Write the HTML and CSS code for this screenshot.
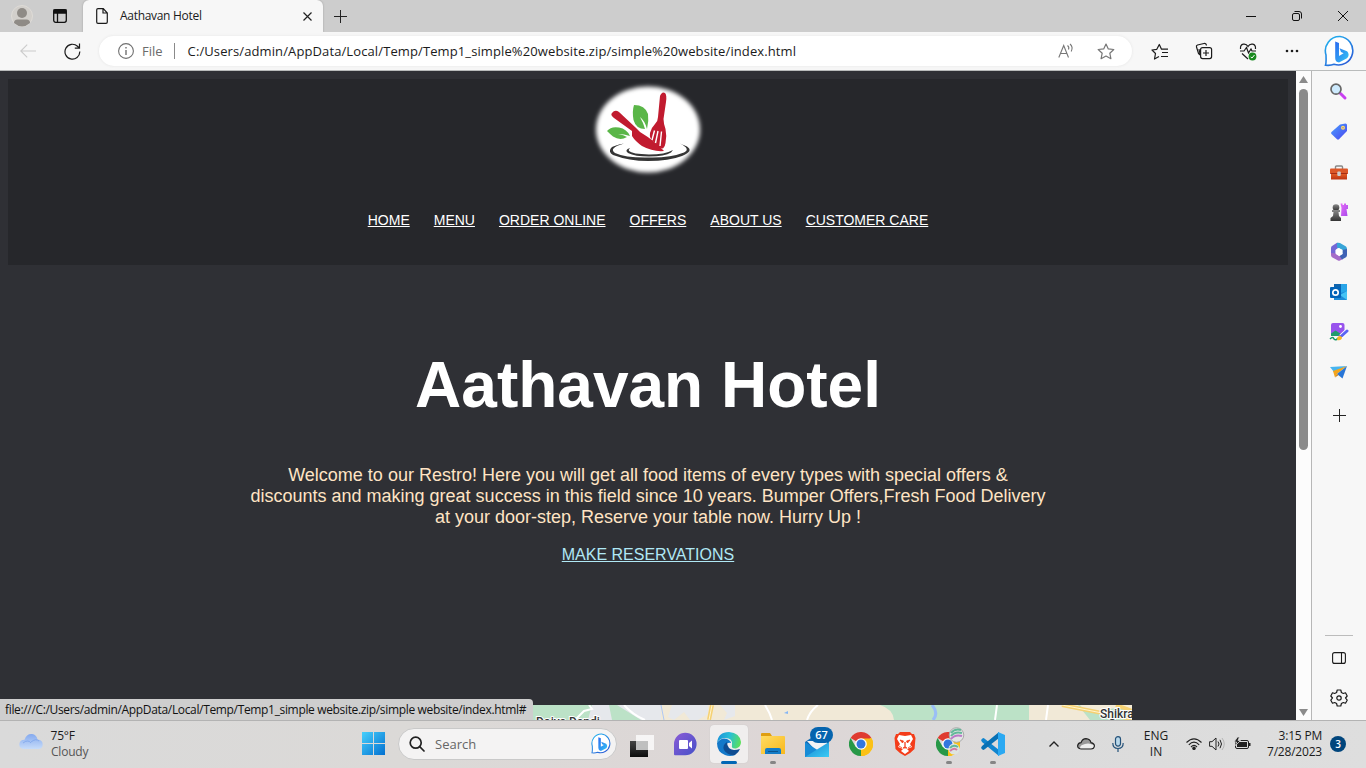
FILE: index.html
```html
<!DOCTYPE html>
<html lang="en">
<head>
<meta charset="utf-8">
<title>Aathavan Hotel</title>
<link rel="stylesheet" href="styles.css">
</head>
<body>
<svg class="defs" width="0" height="0" aria-hidden="true">
  <defs>
    <linearGradient id="bing" x1="0" y1="0" x2="0.7" y2="1"><stop offset="0" stop-color="#20b8f0"/><stop offset="1" stop-color="#2a5fd8"/></linearGradient>
    <linearGradient id="bingb" x1="0" y1="0" x2="1" y2="1"><stop offset="0" stop-color="#2a6af0"/><stop offset="1" stop-color="#35c4f5"/></linearGradient>
    <linearGradient id="win" x1="0" y1="0" x2="1" y2="1"><stop offset="0" stop-color="#46d0fc"/><stop offset="1" stop-color="#0370d0"/></linearGradient>
    <linearGradient id="purple" x1="0" y1="0" x2="1" y2="1"><stop offset="0" stop-color="#8b5cd6"/><stop offset="1" stop-color="#4550c8"/></linearGradient>
    <linearGradient id="edgeTop" x1="0" y1="0.3" x2="1" y2="0.5"><stop offset="0" stop-color="#1a93da"/><stop offset="0.5" stop-color="#28bfd6"/><stop offset="1" stop-color="#5be05c"/></linearGradient>
    <linearGradient id="folder" x1="0" y1="0" x2="1" y2="1"><stop offset="0" stop-color="#ffdb62"/><stop offset="1" stop-color="#f8b81c"/></linearGradient>
    <linearGradient id="cloud" x1="0" y1="0" x2="0" y2="1"><stop offset="0" stop-color="#84a9ee"/><stop offset="1" stop-color="#c7dcfa"/></linearGradient>
    <linearGradient id="tag" x1="0" y1="0" x2="1" y2="1"><stop offset="0" stop-color="#4aa0ff"/><stop offset="1" stop-color="#4b45ef"/></linearGradient>
    <linearGradient id="orange" x1="0" y1="0" x2="0" y2="1"><stop offset="0" stop-color="#e8632a"/><stop offset="1" stop-color="#bd3310"/></linearGradient>
    <linearGradient id="pawn" x1="0" y1="0" x2="0" y2="1"><stop offset="0" stop-color="#8a8a8a"/><stop offset="1" stop-color="#333"/></linearGradient>
    <linearGradient id="rook" x1="0" y1="0" x2="1" y2="1"><stop offset="0" stop-color="#e56cf8"/><stop offset="1" stop-color="#a94bea"/></linearGradient>
    <linearGradient id="mail" x1="0" y1="0" x2="1" y2="1"><stop offset="0" stop-color="#1482d0"/><stop offset="1" stop-color="#3ccbf4"/></linearGradient>
    <linearGradient id="dark" x1="0" y1="0" x2="0" y2="1"><stop offset="0" stop-color="#444"/><stop offset="1" stop-color="#0d0d0d"/></linearGradient>
    <filter id="soft" x="-10%" y="-10%" width="120%" height="120%"><feGaussianBlur stdDeviation="2.2"/></filter>
    <symbol id="bingmark" viewBox="0 0 32 32">
      <path d="M16 1.500A14.300 14.300 0 1 1 10 29.300C7.600 30.300 4.500 30.500 1.500 30.200C2.500 27 2 24 2 20A14.300 14.300 0 0 1 16 1.500Z" fill="#fff" stroke="url(#bing)" stroke-width="1.600"/>
      <path d="M11.200 6.500L15 8V21L19.600 18.300L17 17L15.500 13.200L23 16.300C25.800 19 24.500 22.500 22.500 23.600L15 27.500Q11.200 27 11.200 23Z" fill="url(#bingb)"/>
    </symbol>
    <symbol id="chrome" viewBox="0 0 24 24">
      <path d="M12 12L1.600 6A12 12 0 0 1 22.400 6Z" fill="#df3b30"/>
      <path d="M12 12L22.400 6A12 12 0 0 1 12 24Z" fill="#fbc116"/>
      <path d="M12 12V24A12 12 0 0 1 1.600 6L6.800 15Z" fill="#279847"/>
      <path d="M12 6.500H22.700A12 12 0 0 1 12 24L16.800 15Z" fill="#fbc116"/>
      <circle cx="12" cy="12" r="5.800" fill="#fff"/><circle cx="12" cy="12" r="4.500" fill="#3377df"/>
    </symbol>
  </defs>
</svg>
<div class="screen">
  <header class="tabs">
    <div class="profile"><svg width="22" height="22" viewBox="0 0 22 22"><circle cx="11" cy="11" r="10.500" fill="#d2cfcb" stroke="#dedbd7"/><circle cx="11" cy="8" r="5" fill="#8f8b86"/><path d="M3 18Q3 14.500 6.500 14.500H15.500Q19 14.500 19 18Q11 25 3 18Z" fill="#8f8b86"/></svg></div>
    <div class="workspaces"><svg width="14" height="14" viewBox="0 0 14 14" fill="none" stroke="#111" stroke-width="1.300"><rect x=".7" y=".7" width="12.600" height="12.600" rx="2"/><path d="M1 1H13V4H1Z" fill="#111"/><path d="M4.500 4V13"/></svg></div>
    <div class="tab">
      <svg width="12" height="16" viewBox="0 0 12 16" fill="none" stroke="#1b1b1b" stroke-width="1.200"><path d="M2 .7H7.300L11.300 5V14Q11.300 15.300 10 15.300H2Q.7 15.300 .7 14V2Q.7 .7 2 .7ZM7 .7V5H11.300"/></svg>
      <span class="tab-title">Aathavan Hotel</span>
      <svg width="9" height="9" viewBox="0 0 9 9" stroke="#222" stroke-width="1.200"><path d="M.5 .5L8.500 8.500M8.500 .5L.5 8.500"/></svg>
    </div>
    <svg class="newtab" width="13" height="13" viewBox="0 0 13 13" stroke="#222"><path d="M6.500 0V13M0 6.500H13"/></svg>
    <div class="winbtns">
      <svg width="46" height="32" viewBox="0 0 46 32" stroke="#111"><path d="M18 16.500H28"/></svg>
      <svg width="46" height="32" viewBox="0 0 46 32" stroke="#111" fill="none"><rect x="18.500" y="13.500" width="7" height="7" rx="1.500"/><path d="M20.500 11.500H25Q27.500 11.500 27.500 14V18.500"/></svg>
      <svg width="46" height="32" viewBox="0 0 46 32" stroke="#111"><path d="M18 11L28 21M28 11L18 21"/></svg>
    </div>
  </header>

  <div class="toolbar">
    <svg class="back" width="16" height="14" viewBox="0 0 16 14" fill="none" stroke="#cbcbcb" stroke-width="1.100"><path d="M16 7H.8M7.200 .6L.8 7L7.200 13.400"/></svg>
    <svg class="reload" width="17" height="17" viewBox="0 0 17 17" fill="none" stroke="#1c1c1c" stroke-width="1.200"><path d="M15.800 8.500A7.400 7.400 0 1 1 13.500 3.300L15.300 5M15.500 .5V5.200H10.800"/></svg>
    <div class="address">
      <svg width="16" height="16" viewBox="0 0 16 16" fill="none" stroke="#707070" stroke-width="1.100"><circle cx="8" cy="8" r="7.400"/><path d="M8 7V12M8 4V5.500" stroke-width="1.400"/></svg>
      <span class="scheme">File</span><span class="divider"></span>
      <span class="url">C:/Users/admin/AppData/Local/Temp/Temp1_simple%20website.zip/simple%20website/index.html</span>
      <svg class="read" width="17" height="16" viewBox="0 0 17 16" fill="none" stroke="#777" stroke-width="1.100"><path d="M.8 14.500L5.700 2.500L10.500 14.500M2.500 10.500H9M9.500 2.500Q11.500 4 10.500 6.500M12 1Q15.500 4 13.200 8.500"/></svg>
      <svg width="18" height="17" viewBox="0 0 18 17" fill="none" stroke="#777" stroke-width="1.200" stroke-linejoin="round"><path d="M9 1L11.300 5.900L16.800 6.500L12.800 10.200L13.900 15.700L9 13L4.100 15.700L5.200 10.200L1.200 6.500L6.700 5.900Z"/></svg>
    </div>
    <div class="tools">
      <svg width="44" height="38" viewBox="0 0 44 38" fill="none" stroke="#1c1c1c" stroke-width="1.200" stroke-linejoin="round"><path d="M21 24.500L16.500 27L17.500 21.500L14 18L18.800 17.300L21.300 12.500L23.500 17.200H30M24 20.500H30M23 24.500H30"/></svg>
      <svg width="44" height="38" viewBox="0 0 44 38" fill="none" stroke="#1c1c1c" stroke-width="1.200"><path d="M18 23L16.500 21.500L14.500 15Q14 13.500 15.500 13L22 11.500Q24 11 24.500 13.500M18 22L17 17"/><rect x="18.600" y="15.600" width="11" height="11" rx="2"/><path d="M24 18V24M21 21H27"/></svg>
      <svg width="44" height="38" viewBox="0 0 44 38" fill="none" stroke="#1c1c1c" stroke-width="1.200"><path d="M14.500 17C14 11 20 11 22 14.500C24 11 30 11 29.500 17M14 19H18L20.500 15.500L22.500 21L25 17L26 19H30M16 21.500L22 27"/><circle cx="26.500" cy="24.500" r="3.900" fill="#198a1f" stroke="none"/><path d="M24.700 25L26 26L28.500 23" stroke="#fff" stroke-width="1"/></svg>
      <svg width="44" height="38" viewBox="0 0 44 38" fill="#1c1c1c"><circle cx="17" cy="19" r="1.300"/><circle cx="22" cy="19" r="1.300"/><circle cx="27" cy="19" r="1.300"/></svg>
    </div>
    <svg class="bing" width="32" height="32"><use href="#bingmark"/></svg>
  </div>

  <main class="middle">
    <section class="page">
      <div class="banner">
        <svg class="logo" width="120" height="104" viewBox="588 77 120 104">
          <ellipse cx="648" cy="129.500" rx="52" ry="43" fill="#fff" filter="url(#soft)"/>
          <path d="M611 148Q608 152 613 155Q629 161 648 161Q669 161 682 156Q694 151 687 146.500L680 143.500Q691 149 684 152.500Q670 158 649 157.500Q626 158 615 153Q608 148 624 143.500Q613 145.500 611 148Z" fill="#353535"/>
          <path d="M630 148Q624 150 628 153Q635 156.500 649 156.500Q665 156.500 671 152.500L673 150Q665 154.500 649 154.500Q632 154 629 151Q628 150 630 148Z" fill="#353535"/>
          <path d="M634 105Q645 105 648 114Q649 121 647 129Q645 121 640 117Q643 122 645 129Q636 129 633.500 120Q632 111 634 105Z" fill="#5ab648"/>
          <path d="M607 131Q611 126 619 127.500Q627 129 630 136Q624 134 618 134Q624 135 627 137Q620 141 613 136.500Q610 134 607 131Z" fill="#5ab648"/>
          <path d="M612 113Q615 109 619 112L635 127Q639 131 640 132Q655 141 664 151Q653 152 642 146Q635 141 632 136V131L614 118Q610 115 612 113Z" fill="#c11b2f"/>
          <path d="M660 96Q662 91 665 93Q667 95 666 102L663.500 119Q663.500 123 665.500 129Q667 136 665.500 143Q665 147 663 148.500Q658 148 654 142Q649 139 650 133Q651 128 655 124Q658 121 658 117Z" fill="#c11b2f"/>
          <path d="M654.500 130.500L652 140M658 131L655.500 143M661.500 131.500L660 146" fill="none" stroke="#fff" stroke-width="1.400"/>
        </svg>
        <nav class="menu"><a>HOME</a><a>MENU</a><a>ORDER ONLINE</a><a>OFFERS</a><a>ABOUT US</a><a>CUSTOMER CARE</a></nav>
      </div>
      <div class="hero">
        <h1>Aathavan Hotel</h1>
        <p>Welcome to our Restro! Here you will get all food items of every types with special offers &amp;<br>discounts and making great success in this field since 10 years. Bumper Offers,Fresh Food Delivery<br>at your door-step, Reserve your table now. Hurry Up !</p>
        <a class="reserve">MAKE RESERVATIONS</a>
      </div>
      <svg class="map" width="968" height="15" viewBox="164 705 968 15">
        <path fill="#bce2c7" d="M164 705H1132V720H164Z"/>
        <path fill="#e6e8ec" d="M592 705H609L612 720H588ZM617 705H661V720H641Z"/>
        <path fill="#f1e9d7" d="M661 705H880Q893 709 894 720H661ZM1029 705H1078L1090 720H1029Z"/>
        <path fill="#e6e8ec" d="M672 705H708V714L698 720H690L684 712L674 720L668 717ZM720 705H735V716L724 720L727 713Z"/>
        <path fill="#f4ecd8" d="M1080 705H1132V712Q1114 704 1102 713L1084 710Z"/>
        <path fill="none" stroke="#fff" stroke-width="2" d="M575 720L584 711L592 709L589 705M624 705Q633 715 645 720M765 705Q770 713 772 720M818 705Q810 711 807 720M997 705L995 720M1048 705L1046 720"/>
        <path fill="none" stroke="#aec7f4" d="M661 705L664 720"/><path fill="none" stroke="#9abef6" stroke-width="3" d="M932 705Q939 713 933 720"/>
        <path fill="#86b6f5" d="M784 713L788 711V714Z"/>
        <path fill="none" stroke="#f5d173" stroke-width="4" d="M712 705L709 720M1062 705L1132 719M1116 705L1132 711"/>
        <path fill="none" stroke="#fff4ce" d="M712 705L709 720M1062 705L1132 719"/>
        <text x="536" y="726" class="place">Doiya Dandi</text>
        <text x="1100" y="717.500" class="place">Shikrapur</text>
        <text x="1108" y="728" class="place">Gaon</text>
      </svg>
      <div class="status">file:///C:/Users/admin/AppData/Local/Temp/Temp1_simple website.zip/simple website/index.html#</div>
    </section>
    <div class="scroll">
      <svg width="9" height="7" viewBox="0 0 9 7"><path d="M4.500 0L9 7H0Z" fill="#8b8b8b"/></svg>
      <div class="thumb"></div>
      <svg class="down" width="9" height="7" viewBox="0 0 9 7"><path d="M4.500 7L9 0H0Z" fill="#8b8b8b"/></svg>
    </div>
    <aside class="side">
      <svg width="20" height="20" viewBox="0 0 20 20"><path d="M11.500 11.500L16 16" stroke="#c83ff0" stroke-width="3" stroke-linecap="round"/><circle cx="7" cy="7.200" r="5" fill="#cdeafd" stroke="#666" stroke-width="1.700"/></svg>
      <svg width="20" height="20" viewBox="0 0 20 20"><path d="M11 2.500L16.500 1.500Q18 1.500 18 3V9L10 17.300Q9 18 8 17.300L2.500 12Q1.500 11 2.500 10Z" fill="url(#tag)"/><circle cx="14" cy="5.800" r="2" fill="#ffdf63"/><circle cx="14" cy="5.800" r=".8" fill="#9a79ba"/></svg>
      <svg width="20" height="20" viewBox="0 0 20 20"><path d="M6.500 7V5Q6.500 4 7.500 4H12.500Q13.500 4 13.500 5V7" fill="none" stroke="#888" stroke-width="1.400"/><rect x="1" y="6.500" width="18" height="5.500" rx="1" fill="#dc5728"/><path d="M2 11H18V17.500H2Z" fill="url(#orange)"/><path d="M1.500 11.500H18.500" stroke="#a52d13"/><rect x="8.300" y="9.500" width="3.500" height="4.500" rx="1" fill="#ccc"/></svg>
      <svg width="20" height="20" viewBox="0 0 20 20"><path d="M11.500 1.500H13.500V3H15V1.500H17V3H19V7H17.500L18.500 14H12L12.500 6Z" fill="url(#rook)"/><circle cx="7" cy="5.500" r="3.300" fill="url(#pawn)"/><path d="M3 8H11V10H9.500L10 14L12 16V19H1.500V16L4 14L4.500 10H3Z" fill="url(#pawn)"/></svg>
      <svg width="20" height="20" viewBox="0 0 20 20"><path d="M8 .8L12 2.500L9 6L6.500 8V12L2 13V6Q2 4.500 3 4Z" fill="#7468d6"/><path d="M8 .8Q9.500 .5 11 1L17 4.500Q18 5.500 18 7V10L13.500 11V8L8 5.500Z" fill="#38a5d8"/><path d="M2 11L7 11.500L11 14.500L14 17L11 18.500Q10 19 9 18.500L3 15.200Q2 14.500 2 13Z" fill="#a56cc8"/><path d="M18 7V13Q18 14.500 17 15.200L13 17.500L10.500 14L13.500 12V8Z" fill="#3f62b5"/><path d="M10 6L13.500 8V12L10 14L6.800 12V8Z" fill="#fff"/></svg>
      <svg width="20" height="20" viewBox="0 0 20 20"><path d="M5 2H18V18H5Z" fill="#28a8ea"/><path d="M5 2H12V8H5Z" fill="#0f64ad"/><path d="M12 2H18V7H12Z" fill="#2aa5e8"/><path d="M5 13L18 9V18H5Z" fill="#1e8cd8"/><path d="M18 9V18L11 13Z" fill="#45c4f5"/><rect x="1" y="5" width="11" height="11" rx="1" fill="#0364b8"/><circle cx="6.500" cy="10.500" r="2.700" fill="none" stroke="#fff" stroke-width="1.700"/></svg>
      <svg width="20" height="20" viewBox="0 0 20 20"><rect x="2" y="1" width="13.500" height="13" rx="2" fill="#9853ed"/><circle cx="11.500" cy="4.500" r="1.400" fill="#fff"/><path d="M2 11.500L6.500 8.500L12 12L9 14H2Z" fill="#209c6c"/><path d="M1 17Q4 14 5 17Q7 19 9 16" fill="none" stroke="#159865" stroke-width="1.500"/><path d="M18 9L12 14.500" stroke="#fff" stroke-width="4.500"/><path d="M18 9L12.500 14" stroke="#5a65f3" stroke-width="3" stroke-linecap="round"/><path d="M8 18Q8 14 11 14Q14 15 12.500 17Q11 19 8 18Z" fill="#f8b624"/></svg>
      <svg width="20" height="20" viewBox="0 0 20 20"><path d="M1 5L18 4L5 10Z" fill="#48b5f0"/><path d="M4 9L18 4L8 12L6 15.500Z" fill="#f4a51c"/><path d="M8 12L18 4L13.500 16.500Z" fill="#2876d7"/><path d="M6 15.500L8 12L9.500 13Z" fill="#c77a12"/></svg>
      <svg class="add" width="13" height="13" viewBox="0 0 13 13" stroke="#222"><path d="M6.500 0V13M0 6.500H13"/></svg>
      <div class="side-bottom">
        <svg width="14" height="12" viewBox="0 0 14 12" fill="none" stroke="#1b1b1b" stroke-width="1.100"><rect x=".6" y=".6" width="12.800" height="10.800" rx="2"/><path d="M9.500 .6V11.400"/></svg>
        <svg width="18" height="18" viewBox="0 0 18 18" fill="none" stroke="#1b1b1b" stroke-width="1.200" stroke-linejoin="round"><path d="M7.200 1H10.800L11.400 3.500L13.300 4.500L15.500 3.800L17.200 7L15.500 9L17.200 11.200L15.500 14.200L13.300 13.500L11.400 14.500L10.800 17H7.200L6.600 14.500L4.700 13.500L2.500 14.200L.8 11.200L2.500 9L.8 7L2.500 3.800L4.700 4.500L6.600 3.500Z"/><circle cx="9" cy="9" r="2.200"/></svg>
      </div>
    </aside>
  </main>

  <footer class="taskbar">
    <div class="weather">
      <svg width="24" height="17" viewBox="0 0 24 17"><path d="M5.500 16Q.3 15.800 .3 11.500Q.5 7 5.500 6.800Q7.500 .6 13 1Q17.500 1.500 18.500 6.500Q23.700 7 23.700 11.500Q23.500 16 19 16Z" fill="url(#cloud)"/><path d="M4 10Q9 6 12 10M12 9Q17 5 20 8" fill="none" stroke="#719ce9" opacity=".6"/></svg>
      <div class="lines"><span class="temp">75°F</span><span class="cond">Cloudy</span></div>
    </div>
    <svg class="start" width="23" height="23" viewBox="0 0 23 23"><path d="M0 0H11V11H0ZM12 0H23V11H12ZM0 12H11V23H0ZM12 12H23V23H12Z" fill="url(#win)"/></svg>
    <div class="search">
      <svg width="16" height="16" viewBox="0 0 16 16" fill="none" stroke="#222" stroke-width="1.700"><circle cx="6.700" cy="6.700" r="5.500"/><path d="M10.700 10.700L15 15" stroke-linecap="round"/></svg>
      <span>Search</span>
      <svg width="21" height="21"><use href="#bingmark"/></svg>
    </div>
    <div class="apps">
      <div class="app"><svg width="26" height="26" viewBox="0 0 26 26"><path d="M1 10H19V26H1Z" fill="url(#dark)"/><path d="M7 4H25V19H7Z" fill="#fff" opacity=".75"/><path d="M7 10H19V19H7Z" fill="#bbb" opacity=".8"/></svg></div>
      <div class="app"><svg width="24" height="24" viewBox="0 0 24 24"><path d="M1 23V12A11.300 11.300 0 1 1 12.300 23.300H2Q1 23.300 1 22.300Z" fill="url(#purple)"/><rect x="6" y="8" width="9" height="9" rx="1" fill="#fff"/><path d="M16 11L19 8.500V16.500L16 14Z" fill="#fff"/></svg></div>
      <div class="app active"><svg width="26" height="26" viewBox="0 0 26 26"><path d="M1 12Q2 1 13 1Q24 2 25 11Q25 16 20 17.500Q15 18 16 14Q17 7 9 7Q4 7 1 12Z" fill="url(#edgeTop)"/><path d="M1 12Q5 6 11 8Q15 10 15 12Q10 11 10 16Q10 20 15 23Q17 24 19 24Q14 26 9 24Q1 21 1 12Z" fill="#1378c9"/><path d="M11 11Q6 14 8 19Q12 25 19 24Q23 21 24 18Q21 19 18 19Q11 18 11 11Z" fill="#0d4c92"/></svg></div>
      <div class="app running"><svg width="26" height="26" viewBox="0 0 26 26"><path d="M1 3Q1 2 2 2H10L12 5H1Z" fill="#df9e11"/><path d="M1 5H24Q25 5 25 6V23H1Z" fill="url(#folder)"/><path d="M5 23V19Q5 17 7 17H19Q21 17 21 19V23Z" fill="#147cc7"/><path d="M8 20.500H18" stroke="#0a548e"/></svg></div>
      <div class="app mail"><svg width="24" height="23" viewBox="0 0 24 23"><path d="M0 8L12 0L24 8V23H0Z" fill="#106db7"/><path d="M2 7H22V12L12 18Z" fill="#f1f3f5"/><path d="M0 8L14 17L0 23Z" fill="#178bd6"/><path d="M24 8V23H0Z" fill="url(#mail)"/></svg><b>67</b></div>
      <div class="app"><svg width="24" height="24"><use href="#chrome"/></svg></div>
      <div class="app"><svg width="22" height="25" viewBox="0 0 22 25"><path d="M6 1H16L18 3L20 3L21.500 7L20.500 18Q17 22 11 25Q5 22 1.500 18L.5 7L2 3L4 3Z" fill="#f43c19"/><path d="M11 5L17 4L19 8L16 13L18 16L13 18L15 20L11 23L7 20L9 18L4 16L6 13L3 8L5 4Z" fill="#fff"/><path d="M6 9L9.500 10L8.500 12ZM16 9L12.500 10L13.500 12ZM11 11V16L13 17H9L11 16ZM5 15L8 17M17 15L14 17" fill="#f43c19" stroke="#f43c19" stroke-width=".8"/></svg></div>
      <div class="app running"><svg class="badged" width="32" height="30" viewBox="0 0 32 30"><use href="#chrome" x="3" y="5" width="24" height="24"/><circle cx="23.500" cy="8" r="7.300" fill="#e3e5e4" stroke="#a9a9a9"/><path d="M18 6Q22 1 28 3M18 9Q22 4 29 6" fill="none" stroke="#62b899" stroke-width="2"/><path d="M18 12Q22 7 29 9" fill="none" stroke="#ba79c8" stroke-width="2"/><circle cx="21" cy="22" r="5.500" fill="#dde4e1"/><path d="M17 21Q20 17 25 20" fill="none" stroke="#62b899" stroke-width="2"/><path d="M17 24Q21 20 24 23" fill="none" stroke="#d37aa4" stroke-width="2"/></svg></div>
      <div class="app running"><svg width="24" height="24" viewBox="0 0 24 24"><path d="M0 8L2 6Q3 6 4 7L18 18V24L1 10Z" fill="#1085cf"/><path d="M0 16L2 18Q3 18 4 17L18 6V0L1 14Z" fill="#0871b5"/><path d="M17 0L24 3V21L17 24Z" fill="#2ba9f2"/></svg></div>
    </div>
    <div class="tray">
      <svg class="chev" width="10" height="6" viewBox="0 0 10 6" fill="none" stroke="#222" stroke-width="1.400"><path d="M.5 5.500L5 1L9.500 5.500"/></svg>
      <svg class="drive" width="18" height="12" viewBox="0 0 18 12"><path d="M4 11Q.6 10.500 .6 7.800Q1 5 4 4.700Q5.500 .7 9 .7Q13 1 14 4.700Q17.400 5.500 17.400 8Q17 11 14 11Z" fill="#999" stroke="#222" stroke-width="1.200"/><path d="M3 10.300Q3 7 8 6Q12 4.500 16.500 7Q17 10.300 14 10.300Z" fill="#eee"/></svg>
      <svg class="mic" width="12" height="16" viewBox="0 0 12 16" fill="none" stroke="#24527a" stroke-width="1.200"><rect x="3.500" y=".6" width="5" height="9.500" rx="2.500" fill="#b9d8ea"/><path d="M.8 7Q.8 12.500 6 12.500Q11.200 12.500 11.200 7M6 12.500V16"/></svg>
      <div class="lang"><span>ENG</span><span>IN</span></div>
      <svg class="wifi" width="16" height="12" viewBox="0 0 16 12" fill="none" stroke="#222" stroke-width="1.100"><path d="M.5 4.500Q8-2.800 15.500 4.500M2.800 6.800Q8 1.500 13.200 6.800M5 9Q8 5.800 11 9"/><circle cx="8" cy="10.300" r="1.200" fill="#222"/></svg>
      <svg class="vol" width="16" height="14" viewBox="0 0 16 14" fill="none" stroke="#222"><path d="M.6 4.700H3L7 1V13L3 9.300H.6ZM9 4.500Q11 7 9 9.500M11 2.800Q14 7 11 11.200"/><path d="M13 1Q17.500 7 13 13" stroke="#b5b5b5"/></svg>
      <svg class="batt" width="17" height="13" viewBox="0 0 17 13"><rect x="1.500" y="3.500" width="13" height="8" rx="1.500" fill="none" stroke="#222"/><path d="M3 5H13V10H3ZM15 6H16.500V9H15Z" fill="#222"/><path d="M3.500 0L0 5H2.500L1.500 8.500L6.500 3.500H4L5.500 0Z" fill="#222" stroke="#ddd" stroke-width=".8"/></svg>
      <div class="clock"><span>3:15 PM</span><span>7/28/2023</span></div>
      <div class="notify">3</div>
    </div>
  </footer>
</div>
</body>
</html>
```
FILE: styles.css
```css
* { box-sizing: border-box; }
body { margin: 0; font-family: "Open Sans", "Noto Sans", sans-serif; font-size: 12px; color: #1b1b1b; overflow: hidden; }
svg { display: block; flex: none; }
.defs { position: absolute; }
.screen { width: 1366px; height: 768px; display: flex; flex-direction: column; overflow: hidden; background: #f7f7f7; }

.tabs { height: 32px; flex: none; display: flex; align-items: center; background: #cdcdcd; }
.profile { margin-left: 11px; }
.workspaces { margin-left: 20px; }
.tab { width: 240px; height: 32px; margin-left: 16px; padding: 0 11px 0 13px; display: flex; align-items: center; background: #f7f7f7; border-radius: 6px 6px 0 0; box-shadow: 0 0 2px #999; clip-path: inset(0 -3px); }
.tab-title { flex: 1; margin: -1px 0 0 12px; font-size: 12px; letter-spacing: -0.3px; }
.newtab { margin-left: 11px; }
.winbtns { margin-left: auto; display: flex; }

.toolbar { height: 38px; flex: none; display: flex; align-items: center; background: #f7f7f7; }
.back { margin-left: 20px; }
.reload { margin-left: 28px; }
.address { width: 1033px; height: 30px; margin-left: 18px; padding: 0 17px 0 19px; border-radius: 15px; display: flex; align-items: center; background: #fff; box-shadow: 0 0 3px #e4e4e4; }
.scheme { margin-left: 8px; font-size: 13px; color: #6b6b6b; }
.divider { width: 1px; height: 16px; margin: 0 13px 0 11px; background: #8a8a8a; }
.url { flex: 1; font-size: 13px; letter-spacing: 0.11px; white-space: nowrap; }
.read { margin-right: 22px; }
.tools { margin-left: 6px; display: flex; }
.bing { margin-left: 10px; }

.middle { flex: 1; min-height: 0; display: flex; border-top: 1px solid #b9bbbb; }
.page { position: relative; width: 1296px; overflow: hidden; background: #2f3035; font-family: "Liberation Sans", Arial, sans-serif; display: flex; flex-direction: column; padding-top: 8px; }
.banner { height: 186px; flex: none; margin: 0 8px; background: #26272b; display: flex; flex-direction: column; align-items: center; }
.logo { margin-top: -2px; }
.menu { display: flex; gap: 24px; margin-top: 31px; font-size: 14px; line-height: 16px; color: #fff; white-space: nowrap; }
.menu a, .reserve { text-decoration: underline; }
.hero { height: 440px; flex: none; display: flex; flex-direction: column; align-items: center; text-align: center; }
.hero h1 { margin: 83px 0 0; font-size: 64px; line-height: 74px; color: #fff; }
.hero p { margin: 43px 0 0; font-size: 18px; line-height: 21px; color: #ffe4c4; white-space: nowrap; }
.reserve { margin-top: 18px; font-size: 16px; line-height: 18px; color: #b0e8f5; }
.map { margin-left: 164px; }
.place { font: 500 12px Roboto, sans-serif; fill: #333; stroke: #fff; stroke-width: 2px; paint-order: stroke; }
.status { position: absolute; left: 0; bottom: 0; width: 533px; height: 21px; padding-left: 5px; border-top-right-radius: 4px; background: #cecece; color: #111; font: 12px/21px "Open Sans", sans-serif; letter-spacing: -0.34px; white-space: nowrap; }

.scroll { width: 16px; display: flex; flex-direction: column; align-items: center; background: #fcfcfc; border-right: 1px solid #b7b7b7; padding-top: 5px; }
.thumb { width: 9px; height: 361px; margin-top: 6px; border-radius: 5px; background: #8b8b8b; }
.down { margin: auto 0 4px; }
.side { width: 54px; display: flex; flex-direction: column; align-items: center; gap: 20px; padding-top: 11px; background: #f7f7f7; }
.add { margin-top: 7px; }
.side-bottom { width: 28px; height: 85px; margin-top: auto; border-top: 1px solid #bcbcbc; padding-top: 16px; display: flex; flex-direction: column; align-items: center; gap: 25px; }

.taskbar { height: 48px; flex: none; display: flex; align-items: center; background: linear-gradient(90deg, #dadada, #dbd9d7 30%, #ddd6d6 58%, #dbdbdb 76%, #dedede); border-top: 1px solid #b3b3b3; padding-bottom: 2px; }
.weather { width: 343px; padding-left: 19px; display: flex; align-items: center; gap: 8px; }
.weather svg { margin-top: -4px; }
.lines, .lang, .clock { display: flex; flex-direction: column; line-height: 16px; font-size: 12px; }
.temp, .clock { letter-spacing: -0.2px; }
.temp { margin-left: -0.5px; }
.cond { color: #555; letter-spacing: -0.2px; }
.start { margin-left: 19px; }
.search { width: 219px; height: 32px; margin-left: 13px; padding: 0 4px 0 10px; flex: none; display: flex; align-items: center; background: #f4f3f3; border: 1px solid #c9c9c9; border-radius: 16px; }
.search span { flex: 1; margin-left: 10px; font-size: 13px; color: #666; }
.apps { display: flex; flex: none; margin-left: 2px; isolation: isolate; }
.app { position: relative; width: 44px; height: 40px; display: flex; align-items: center; justify-content: center; }
.app:first-child svg { margin-left: 2px; }
.active::before { content: ""; position: absolute; z-index: -1; inset: 1px 3px; border-radius: 4px; background: #f0eeee; box-shadow: 0 0 1px #bbb; }
.active::after, .running::after { content: ""; position: absolute; bottom: 0; width: 6px; height: 3px; border-radius: 2px; background: #858585; }
.active::after { bottom: 0; width: 16px; background: #0067b5; }
.badged { margin-bottom: 3px; }
.mail svg { margin-top: 3px; }
.mail b { position: absolute; left: 15px; top: 3px; width: 23px; height: 16px; border-radius: 8px; background: #0664ae; color: #fff; text-align: center; font: 600 11px/16px "Open Sans", sans-serif; }
.tray { flex: 1; display: flex; align-items: center; }
.chev { margin-left: 34px; }
.drive { margin-left: 18px; }
.mic { margin-left: 17px; }
.lang { width: 34px; margin-left: 15px; text-align: center; align-items: center; }
.wifi { margin-left: 13px; }
.vol { margin-left: 7px; }
.batt { margin-left: 9px; }
.clock { width: 71px; align-items: flex-end; }
.notify { width: 16px; height: 16px; margin-left: 8px; flex: none; border-radius: 50%; background: #00457c; color: #fff; text-align: center; font-size: 10px; line-height: 16px; font-weight: 600; }
```
